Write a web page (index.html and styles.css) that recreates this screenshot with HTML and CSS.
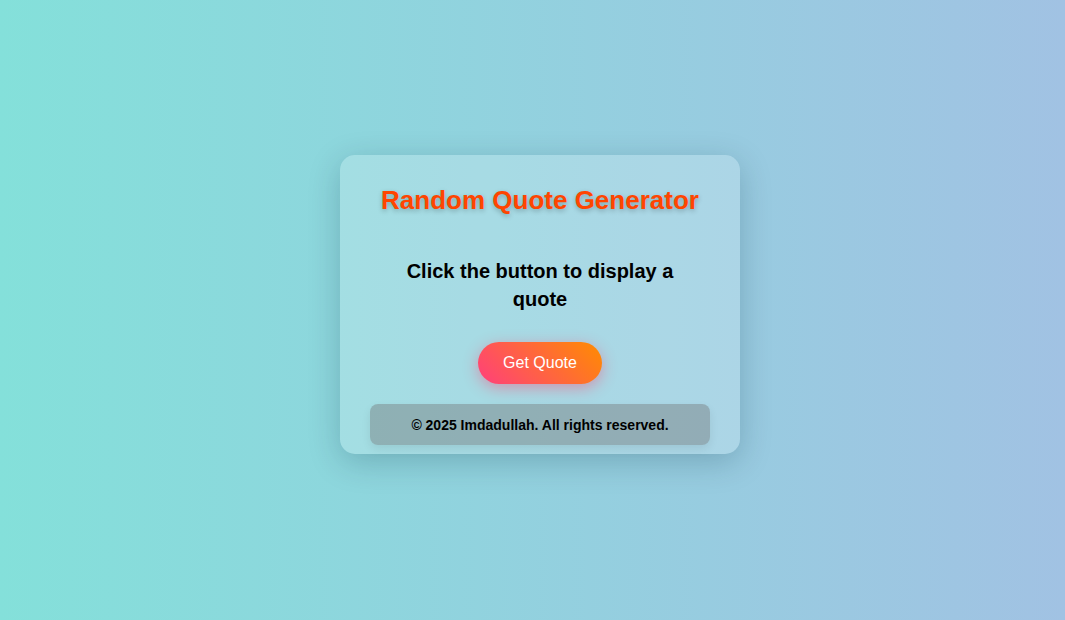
FILE: index.html
```html
<!DOCTYPE html>
<html lang="en">
<head>
<meta charset="UTF-8">
<title>Random Quote Generator</title>
<link rel="stylesheet" href="styles.css">
</head>
<body>
  <div class="card">
    <h1 class="title">Random Quote Generator</h1>
    <p class="quote">Click the button to display a quote</p>
    <button class="btn">Get Quote</button>
    <footer class="footer">© 2025 Imdadullah. All rights reserved.</footer>
  </div>
</body>
</html>
```
FILE: styles.css
```css
html, body {
  margin: 0;
  padding: 0;
  height: 100%;
}
body {
  font-family: "Liberation Sans", Arial, sans-serif;
  background: linear-gradient(to right, #84e0da, #a1c2e3);
  display: flex;
  align-items: center;
  justify-content: center;
  padding-left: 15px;
  box-sizing: border-box;
}
.card {
  width: 400px;
  box-sizing: border-box;
  padding: 30px 30px 9px;
  background: rgba(255, 255, 255, 0.2);
  border-radius: 15px;
  box-shadow: 0 8px 32px rgba(0, 40, 60, 0.22);
  display: flex;
  flex-direction: column;
  align-items: center;
  text-align: center;
  margin-top: -11px;
}
.title {
  margin: 0;
  font-size: 26px;
  line-height: 30px;
  font-weight: bold;
  color: #ff4500;
  text-shadow: 0 2px 5px rgba(0, 0, 0, 0.25);
}
.quote {
  margin: 42px 0 0;
  padding: 0 20px;
  font-size: 20px;
  line-height: 28px;
  font-weight: bold;
  color: #000;
}
.btn {
  margin-top: 29px;
  border: none;
  border-radius: 30px;
  padding: 12px 25px;
  font-family: "Liberation Sans", Arial, sans-serif;
  font-size: 16px;
  line-height: 18px;
  color: #fff;
  background: linear-gradient(45deg, #ff3f7c, #ff8c00);
  box-shadow: 0 4px 15px rgba(255, 65, 108, 0.45);
}
.footer {
  margin-top: 20px;
  align-self: stretch;
  height: 41px;
  display: flex;
  align-items: center;
  justify-content: center;
  font-size: 14px;
  font-weight: bold;
  color: #000;
  background: rgba(110, 110, 110, 0.4);
  border-radius: 8px;
  box-shadow: 0 4px 10px rgba(0, 0, 0, 0.08);
}
```
